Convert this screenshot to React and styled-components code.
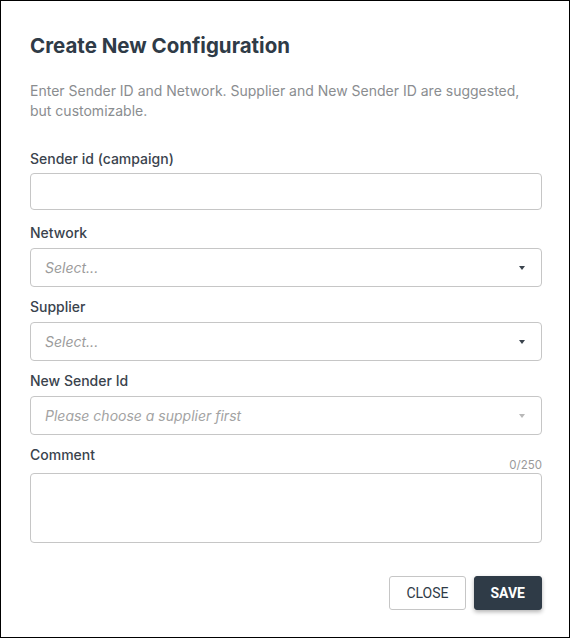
import React from 'react';
import styled, { createGlobalStyle } from 'styled-components';

const GlobalStyle = createGlobalStyle`
  html, body {
    margin: 0;
    padding: 0;
    background: #ffffff;
  }
  body {
    font-family: Inter, Roboto, "Liberation Sans", Arial, sans-serif;
  }
`;

// Styled Components
const Modal = styled.div`
  box-sizing: border-box;
  width: 570px;
  height: 638px;
  border: 1px solid #000000;
  background: #ffffff;
  padding: 31px 27px 0 29px;
  display: flex;
  flex-direction: column;
`;

const Title = styled.h2`
  margin: 0;
  font-size: 20.5px;
  line-height: 28px;
  font-weight: 700;
  color: #2f3b47;
`;

const Description = styled.p`
  margin: 21px 0 28px;
  font-size: 14px;
  line-height: 20px;
  color: #8a8d90;
`;

const Field = styled.div`
  display: flex;
  flex-direction: column;
  margin-bottom: ${(p) => p.$gap ?? 10}px;
`;

const LabelRow = styled.div`
  display: flex;
  justify-content: space-between;
  align-items: flex-start;
  margin-bottom: ${(p) => p.$gap ?? 5}px;
`;

const Label = styled.label`
  font-size: 14px;
  line-height: 20px;
  font-weight: 500;
  color: #3a434d;
`;

const Counter = styled.span`
  margin-top: 13px;
  font-size: 11.5px;
  line-height: 14px;
  color: #9a9a9a;
`;

const TextInput = styled.input`
  box-sizing: border-box;
  height: 37px;
  width: 100%;
  border: 1px solid #c6c6c6;
  border-radius: 4px;
  padding: 0 14px;
  font: inherit;
  font-size: 14px;
  outline: none;
`;

const SelectBox = styled.div`
  box-sizing: border-box;
  height: 39px;
  border: 1px solid #c6c6c6;
  border-radius: 4px;
  padding: 0 16px 0 14px;
  display: flex;
  align-items: center;
  justify-content: space-between;
  background: #ffffff;
`;

const Placeholder = styled.span`
  font-size: 14px;
  font-style: italic;
  color: ${(p) => (p.$disabled ? '#a3a3a3' : '#9b9b9b')};
`;

const Caret = styled.span`
  width: 0;
  height: 0;
  border-left: 3.5px solid transparent;
  border-right: 3.5px solid transparent;
  border-top: 4px solid ${(p) => (p.$disabled ? '#b8b8b8' : '#3a434d')};
`;

const TextArea = styled.textarea`
  box-sizing: border-box;
  height: 70px;
  width: 100%;
  border: 1px solid #c6c6c6;
  border-radius: 4px;
  padding: 10px 14px;
  font: inherit;
  font-size: 14px;
  resize: none;
  outline: none;
`;

const Actions = styled.div`
  display: flex;
  justify-content: flex-end;
  gap: 8px;
  margin-top: 33px;
`;

const Button = styled.button`
  box-sizing: border-box;
  height: 34px;
  padding: 0 16px;
  border-radius: 3px;
  font-family: Roboto, "Liberation Sans", Arial, sans-serif;
  font-size: 14px;
  text-transform: uppercase;
  cursor: pointer;
  border: 1px solid ${(p) => (p.$primary ? '#2f3b47' : '#c6c6c6')};
  background: ${(p) => (p.$primary ? '#2f3b47' : '#ffffff')};
  color: ${(p) => (p.$primary ? '#ffffff' : '#2f3b47')};
  font-weight: ${(p) => (p.$primary ? 700 : 400)};
  box-shadow: ${(p) => (p.$primary ? '0 2px 4px rgba(0, 0, 0, 0.3)' : 'none')};
`;

const SelectField = ({ label, placeholder, disabled }) => (
  <Field>
    <LabelRow>
      <Label>{label}</Label>
    </LabelRow>
    <SelectBox>
      <Placeholder $disabled={disabled}>{placeholder}</Placeholder>
      <Caret $disabled={disabled} />
    </SelectBox>
  </Field>
);

const App = () => (
  <>
    <GlobalStyle />
    <Modal>
      <Title>Create New Configuration</Title>
      <Description>
        Enter Sender ID and Network. Supplier and New Sender ID are suggested,
        but customizable.
      </Description>

      <Field $gap={13}>
        <LabelRow $gap={4}>
          <Label>Sender id (campaign)</Label>
        </LabelRow>
        <TextInput />
      </Field>

      <SelectField label="Network" placeholder="Select..." />
      <SelectField label="Supplier" placeholder="Select..." />
      <SelectField label="New Sender Id" placeholder="Please choose a supplier first" disabled />

      <Field $gap={0}>
        <LabelRow $gap={1}>
          <Label>Comment</Label>
          <Counter>0/250</Counter>
        </LabelRow>
        <TextArea />
      </Field>

      <Actions>
        <Button>Close</Button>
        <Button $primary>Save</Button>
      </Actions>
    </Modal>
  </>
);

export default App;
